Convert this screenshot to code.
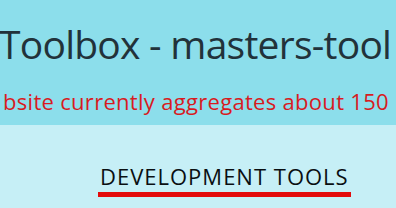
import React from "react";

const App = () => {
  return (
    <div className="w-[396px] h-[208px] overflow-hidden font-['Open_Sans',sans-serif]">
      <div className="h-[125px] bg-[#8cdeeb] pt-[20px] overflow-hidden">
        <h1 className="whitespace-nowrap ml-[-1px] text-[39px] leading-[48px] tracking-[-0.75px] text-[#22323a]">
          Toolbox - masters-tool
        </h1>
        <p className="whitespace-nowrap ml-[3px] mt-[19px] text-[22px] leading-[28px] tracking-[0.3px] text-[#d81b1f]">
          bsite currently aggregates about 150
        </p>
      </div>
      <div className="h-[83px] bg-[#c6eff6] pl-[98px] pt-[37px]">
        <div className="inline-block">
          <h2 className="text-[22px] leading-[28px] tracking-[1px] pl-[2px] pr-[2px] text-[#0a0f12]">
            DEVELOPMENT TOOLS
          </h2>
          <div className="mt-[2px] h-[5px] bg-[#e30b0b]"></div>
        </div>
      </div>
    </div>
  );
};

export default App;
